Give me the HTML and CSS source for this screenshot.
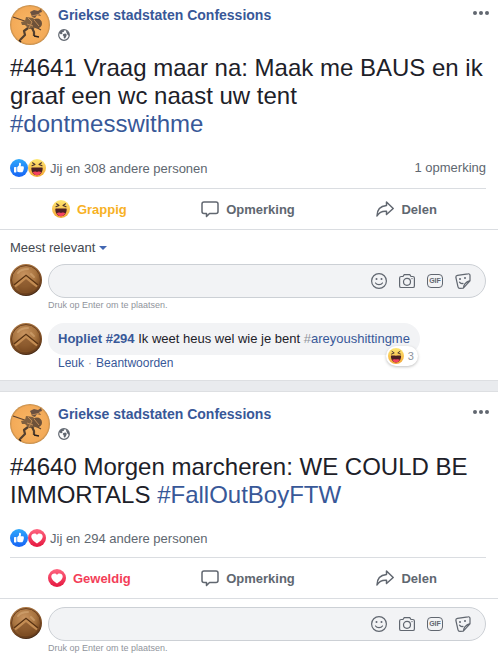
FILE: index.html
```html
<!DOCTYPE html>
<html lang="nl">
<head>
  <meta charset="UTF-8">
  <meta name="viewport" content="width=device-width, initial-scale=1.0">
  <title>Griekse stadstaten Confessions</title>
  <link rel="stylesheet" href="styles.css">
</head>
<body>
  <!-- shared icons -->
  <svg class="sprite" aria-hidden="true">
    <defs>
      <linearGradient id="blue" x1="0" y1="0" x2="0" y2="1"><stop offset="0" stop-color="#2fa8fb"/><stop offset="1" stop-color="#1663f5"/></linearGradient>
      <linearGradient id="red" x1="0" y1="0" x2="0" y2="1"><stop offset="0" stop-color="#ff6680"/><stop offset="1" stop-color="#e5173f"/></linearGradient>
      <linearGradient id="yellow" x1="0" y1="0" x2="0" y2="1"><stop offset="0" stop-color="#fee873"/><stop offset="1" stop-color="#f4a535"/></linearGradient>
      <radialGradient id="bronze" cx="0.45" cy="0.35" r="0.65"><stop offset="0" stop-color="#c99460"/><stop offset="0.55" stop-color="#a87440"/><stop offset="0.85" stop-color="#7c4c22"/><stop offset="1" stop-color="#3e2310"/></radialGradient>
      <radialGradient id="sand" cx="0.5" cy="0.5" r="0.5"><stop offset="0" stop-color="#f9b866"/><stop offset="0.9" stop-color="#f3aa58"/><stop offset="1" stop-color="#c08a48"/></radialGradient>
    </defs>
    <symbol id="like" viewBox="0 0 18 18">
      <circle cx="9" cy="9" r="9" fill="url(#blue)"/>
      <rect x="4" y="8" width="2.4" height="5.4" rx="0.6" fill="#fff"/>
      <path fill="#fff" d="M7.200 8.200 9 6.200V4.400c0-1 1.700-1 2 .3.2.9-.1 1.800-.4 2.600h2.300c1 0 1.400 1.100.7 1.700.5.5.4 1.300-.2 1.600.3.6 0 1.200-.5 1.400.1.8-.4 1.300-1.200 1.300H9.400c-1 0-1.600-.3-2.200-.8z"/>
    </symbol>
    <symbol id="love" viewBox="0 0 18 18">
      <circle cx="9" cy="9" r="9" fill="url(#red)"/>
      <path fill="#fff" d="M9 14.500C6.300 12.800 3.300 10.500 3.300 7.600c0-3.200 4.200-4.300 5.700-1.700 1.500-2.600 5.700-1.500 5.700 1.700 0 2.900-3 5.200-5.700 6.900z"/>
    </symbol>
    <symbol id="haha" viewBox="0 0 18 18">
      <circle cx="9" cy="9" r="9" fill="url(#yellow)"/>
      <path d="M4.500 3.800 7 5.500 4 6.800M13.500 3.800 11 5.500l3 1.300" fill="none" stroke="#4a3430" stroke-width="1.100" stroke-linejoin="round" stroke-linecap="round"/>
      <path fill="#4b2024" d="M3.300 9.200c0-.8 1.500-.6 5.700-.6s5.700-.2 5.700.6c0 3.700-2.200 7-5.700 7s-5.700-3.300-5.700-7z"/>
      <path fill="#f5425f" d="M4.700 13.300C6 12.300 7.500 12.500 9 13c1.500-.5 3-.7 4.300.3-1 1.800-2.500 2.900-4.300 2.900s-3.300-1.100-4.300-2.900z"/>
    </symbol>
    <symbol id="hoplite" viewBox="0 0 40 40">
      <circle cx="20" cy="20" r="20" fill="url(#sand)"/>
      <path d="M3 12 16 16.500 31 25" fill="none" stroke="#5c4230" stroke-width="1.200"/>
      <path fill="#6b5140" d="m20 7 4-2 4 1 3-2 1 3-3 1 2 3-4-1-2 3-3-1-1-3z"/>
      <path fill="#80603f" d="m16 12 7 1 4 4-3 7-5 0-4-4-3 0-1-3 4-1z"/>
      <circle cx="27" cy="18.500" r="5" fill="#6d5139"/>
      <path d="m18 13 4 4-3 6M24 15l5 6M22 11l8-2M17 19l6 2" fill="none" stroke="#c08c58"/>
      <path fill="none" stroke="#54402f" stroke-width="2.200" stroke-linejoin="round" d="m18 23-4 3 1 4-5 5M22 23l2 4 0 4"/>
      <path fill="none" stroke="#2d211c" stroke-width="1.400" d="m24 31 5 1M9 35l2 2"/>
    </symbol>
    <symbol id="shield" viewBox="0 0 32 32">
      <circle cx="16" cy="16" r="16" fill="url(#bronze)"/>
      <circle cx="16" cy="16" r="14.500" fill="none" stroke="#6b4020" stroke-width="1"/>
      <path fill="#7a4a22" d="M7 23 16 15l9 8-4 5H11z" opacity=".6"/>
      <path fill="none" stroke="#5a3414" stroke-width="1.500" d="M4 21 16 11.500 28 21"/>
      <path fill="none" stroke="#c48d54" stroke-width="2" d="M5 22.500 16 13.500 27 22.500"/>
      <path fill="none" stroke="#e5bd8c" stroke-width="2" stroke-linecap="round" opacity=".4" d="M8 9c2-3 6-4 10-4M21 10l3 3"/>
    </symbol>
    <symbol id="globe" viewBox="0 0 12 12">
      <circle cx="6" cy="6" r="5.300" fill="#fff" stroke="#616770" stroke-width="1.200"/>
      <path fill="#616770" d="M1 4 3.500 1l3 .2L5.800 2.800 4 3.400 4.500 5 2.800 5.200zM5.300 5l2.200-.4 1.300 1.200-.6 1.800L7 9.800 5.800 8.900 5.600 7 4.700 6.200zM7.800 1.300 11 4l.2 3-1.700-1.300-1-2z"/>
    </symbol>
    <symbol id="dots" viewBox="0 0 16 4">
      <g fill="#616770"><circle cx="2" cy="2" r="2"/><circle cx="8" cy="2" r="2"/><circle cx="14" cy="2" r="2"/></g>
    </symbol>
    <symbol id="bubble" viewBox="0 0 18 18">
      <path fill="none" stroke="#616770" stroke-width="1.500" stroke-linejoin="round" d="M3 2h12a2 2 0 0 1 2 2v7.500a2 2 0 0 1-2 2H8.500L5.500 16.500v-3H3a2 2 0 0 1-2-2V4a2 2 0 0 1 2-2z"/>
    </symbol>
    <symbol id="share" viewBox="0 0 18 18">
      <path fill="none" stroke="#616770" stroke-width="1.500" stroke-linejoin="round" d="M10.500 2 17.200 8.500 10.500 14.500V11.300C6 11 3 12.500 1 16 1 10 4.500 6 10.500 5.500z"/>
    </symbol>
    <symbol id="smiley" viewBox="0 0 16 16">
      <circle cx="8" cy="8" r="7.400" fill="none" stroke="#616770" stroke-width="1.200"/>
      <circle cx="5.500" cy="6" r="1" fill="#616770"/><circle cx="10.500" cy="6" r="1" fill="#616770"/>
      <path fill="none" stroke="#616770" stroke-width="1.200" stroke-linecap="round" d="M4.500 10c1.500 2.200 5.500 2.200 7 0"/>
    </symbol>
    <symbol id="camera" viewBox="0 0 16 16">
      <path fill="none" stroke="#616770" stroke-width="1.200" stroke-linejoin="round" d="M2.200 3.500H4L5.200 1.700h5.600L12 3.500h1.800c1 0 1.600.6 1.600 1.600v7.800c0 1-.6 1.600-1.600 1.600H2.200c-1 0-1.600-.6-1.600-1.600V5.100c0-1 .6-1.600 1.600-1.600z"/>
      <circle cx="8" cy="8.800" r="3.500" fill="none" stroke="#616770" stroke-width="1.200"/>
      <circle cx="13" cy="5.600" r=".7" fill="#616770"/>
    </symbol>
    <symbol id="sticker" viewBox="0 0 16 16">
      <path fill="none" stroke="#616770" stroke-width="1.200" stroke-linejoin="round" d="M2.500 2.300 13 .8c1.200-.2 2 .5 2 1.700v5.300L8.300 15.200l-3.500.1c-1 0-1.600-.5-1.800-1.500L.9 4.500C.7 3.300 1.300 2.500 2.500 2.300zM15 7.600c-3.700 1.200-6.500 3.200-6.700 7.600"/>
      <circle cx="5" cy="6" r="1" fill="#616770"/><circle cx="10" cy="5" r="1" fill="#616770"/>
      <path fill="none" stroke="#616770" stroke-width="1.200" stroke-linecap="round" d="M4.500 9.200c.8 1.200 2 1.600 3.500 1.200"/>
    </symbol>
  </svg>

  <main class="feed">
    <article class="post post-first">
      <header class="post-header">
        <svg class="avatar"><use href="#hoplite"/></svg>
        <div class="post-info">
          <a class="page-name" href="#">Griekse stadstaten Confessions</a>
          <svg class="globe"><use href="#globe"/></svg>
        </div>
        <button class="more" aria-label="Meer"><svg><use href="#dots"/></svg></button>
      </header>
      <p class="post-text">#4641 Vraag maar na: Maak me BAUS en ik graaf een wc naast uw tent <a href="#">#dontmesswithme</a></p>
      <div class="reactions">
        <svg class="icon"><use href="#like"/></svg>
        <svg class="icon"><use href="#haha"/></svg>
        <a class="reaction-names" href="#">Jij en 308 andere personen</a>
        <a class="comment-count" href="#">1 opmerking</a>
      </div>
      <div class="actions">
        <button class="action haha"><svg class="icon"><use href="#haha"/></svg>Grappig</button>
        <button class="action"><svg class="icon"><use href="#bubble"/></svg>Opmerking</button>
        <button class="action"><svg class="icon"><use href="#share"/></svg>Delen</button>
      </div>
      <section class="comments">
        <button class="sort">Meest relevant<span class="caret"></span></button>
        <div class="row">
          <svg class="avatar-small"><use href="#shield"/></svg>
          <div class="row-body">
            <div class="comment-box">
              <input type="text" aria-label="Schrijf een opmerking">
              <button aria-label="Emoji"><svg><use href="#smiley"/></svg></button>
              <button aria-label="Foto"><svg><use href="#camera"/></svg></button>
              <button class="gif">GIF</button>
              <button aria-label="Sticker"><svg><use href="#sticker"/></svg></button>
            </div>
            <div class="hint">Druk op Enter om te plaatsen.</div>
          </div>
        </div>
        <div class="row">
          <svg class="avatar-small"><use href="#shield"/></svg>
          <div class="row-body">
            <div class="comment">
              <a class="author" href="#">Hopliet #294</a> Ik weet heus wel wie je bent <a href="#"><span class="hash">#</span>areyoushittingme</a>
              <span class="badge"><svg><use href="#haha"/></svg>3</span>
            </div>
            <div class="comment-links"><a href="#">Leuk</a><span class="dot">·</span><a href="#">Beantwoorden</a></div>
          </div>
        </div>
      </section>
    </article>

    <article class="post">
      <header class="post-header">
        <svg class="avatar"><use href="#hoplite"/></svg>
        <div class="post-info">
          <a class="page-name" href="#">Griekse stadstaten Confessions</a>
          <svg class="globe"><use href="#globe"/></svg>
        </div>
        <button class="more" aria-label="Meer"><svg><use href="#dots"/></svg></button>
      </header>
      <p class="post-text">#4640 Morgen marcheren: WE COULD BE IMMORTALS <a href="#">#FallOutBoyFTW</a></p>
      <div class="reactions">
        <svg class="icon"><use href="#like"/></svg>
        <svg class="icon"><use href="#love"/></svg>
        <a class="reaction-names" href="#">Jij en 294 andere personen</a>
      </div>
      <div class="actions">
        <button class="action love"><svg class="icon"><use href="#love"/></svg>Geweldig</button>
        <button class="action"><svg class="icon"><use href="#bubble"/></svg>Opmerking</button>
        <button class="action"><svg class="icon"><use href="#share"/></svg>Delen</button>
      </div>
      <section class="comments">
        <div class="row">
          <svg class="avatar-small"><use href="#shield"/></svg>
          <div class="row-body">
            <div class="comment-box">
              <input type="text" aria-label="Schrijf een opmerking">
              <button aria-label="Emoji"><svg><use href="#smiley"/></svg></button>
              <button aria-label="Foto"><svg><use href="#camera"/></svg></button>
              <button class="gif">GIF</button>
              <button aria-label="Sticker"><svg><use href="#sticker"/></svg></button>
            </div>
            <div class="hint">Druk op Enter om te plaatsen.</div>
          </div>
        </div>
      </section>
    </article>
  </main>
</body>
</html>
```
FILE: styles.css
```css
* {
  box-sizing: border-box;
}
body {
  margin: 0;
  background: #e9ebee;
  color: #1d2129;
  font-family: "Liberation Sans", Arial, sans-serif;
  font-size: 13px;
}
a {
  color: #385898;
  text-decoration: none;
}
a:hover {
  text-decoration: underline;
}
button {
  padding: 0;
  border: 0;
  background: none;
  font: inherit;
  cursor: pointer;
}
svg {
  display: block;
  flex-shrink: 0;
}
.sprite {
  position: absolute;
  width: 0;
  height: 0;
}
.feed {
  display: flex;
  flex-direction: column;
  gap: 10px;
}

/* Post */
.post {
  padding-top: 12px;
  background: #fff;
  border-top: 1px solid #dddfe2;
  border-bottom: 1px solid #dddfe2;
}
.post-first {
  padding-top: 5px;
  border-top: 0;
}
.post:last-child {
  border-bottom: 0;
}
.post-header {
  display: flex;
  align-items: flex-start;
  gap: 8px;
  padding: 0 9px 0 10px;
}
.avatar {
  width: 40px;
  height: 40px;
}
.post-info {
  flex: 1;
}
.page-name {
  display: block;
  font-size: 14px;
  font-weight: bold;
  line-height: 20px;
}
.globe {
  width: 12px;
  height: 12px;
  margin-top: 4px;
}
.more {
  padding: 6px 0;
}
.more svg {
  width: 16px;
  height: 4px;
}
.post-text {
  margin: 9px 10px 0;
  font-size: 24px;
  line-height: 28px;
}

/* Reactions and buttons */
.icon {
  width: 18px;
  height: 18px;
}
.reactions {
  display: flex;
  align-items: center;
  margin: 0 12px 0 10px;
  padding: 20px 0 10px;
}
.reactions a {
  color: #606770;
}
.reaction-names {
  margin-left: 4px;
}
.comment-count {
  margin-left: auto;
  line-height: 20px;
}
.actions {
  display: flex;
  margin: 0 12px 0 10px;
  border-top: 1px solid #dadde1;
}
.action {
  display: flex;
  flex: 1;
  align-items: center;
  justify-content: center;
  gap: 7px;
  height: 40px;
  color: #606770;
  font-weight: bold;
}
.haha {
  color: #f7b125;
}
.love {
  color: #f33e58;
}

/* Comments */
.comments {
  padding: 8px 12px 8px 10px;
  border-top: 1px solid #dadde1;
}
.post:last-child .comments {
  padding-bottom: 0;
}
.sort {
  display: flex;
  align-items: center;
  gap: 4px;
  margin-bottom: 6px;
  color: #444950;
  line-height: 20px;
}
.caret {
  border: 4px solid transparent;
  border-top-color: #4267b2;
  border-bottom: 0;
}
.row {
  display: flex;
  gap: 6px;
}
.avatar-small {
  width: 32px;
  height: 32px;
}
.row-body {
  flex: 1;
}
.comment-box {
  display: flex;
  align-items: center;
  gap: 12px;
  height: 34px;
  padding: 0 14px;
  background: #f2f3f5;
  border: 1px solid #ccd0d5;
  border-radius: 17px;
}
.comment-box input {
  flex: 1;
  min-width: 0;
  border: 0;
  outline: 0;
  background: none;
  font: inherit;
}
.comment-box svg {
  width: 16px;
  height: 16px;
}
.gif {
  width: 16px;
  height: 14px;
  border: 1px solid #616770;
  border-radius: 4px;
  color: #616770;
  font-size: 7px;
  font-weight: bold;
  line-height: 12px;
}
.hint {
  padding-bottom: 11px;
  color: #90949c;
  font-size: 9px;
  line-height: 14px;
}
.comment {
  position: relative;
  width: fit-content;
  padding: 8px 10px;
  background: #f2f3f5;
  border-radius: 16px;
  line-height: 16px;
}
.author {
  font-weight: bold;
}
.hash {
  color: #90949c;
}
.badge {
  display: flex;
  position: absolute;
  right: 2px;
  bottom: -11px;
  align-items: center;
  gap: 4px;
  padding: 2px 4px 2px 2px;
  background: #fff;
  border-radius: 10px;
  box-shadow: 0 1px 3px rgba(0, 0, 0, 0.25);
  color: #8d949e;
  font-size: 11px;
}
.badge svg {
  width: 16px;
  height: 16px;
}
.comment-links {
  padding-left: 10px;
  font-size: 12px;
  line-height: 17px;
}
.dot {
  padding: 0 4px;
  color: #90949c;
}
```
